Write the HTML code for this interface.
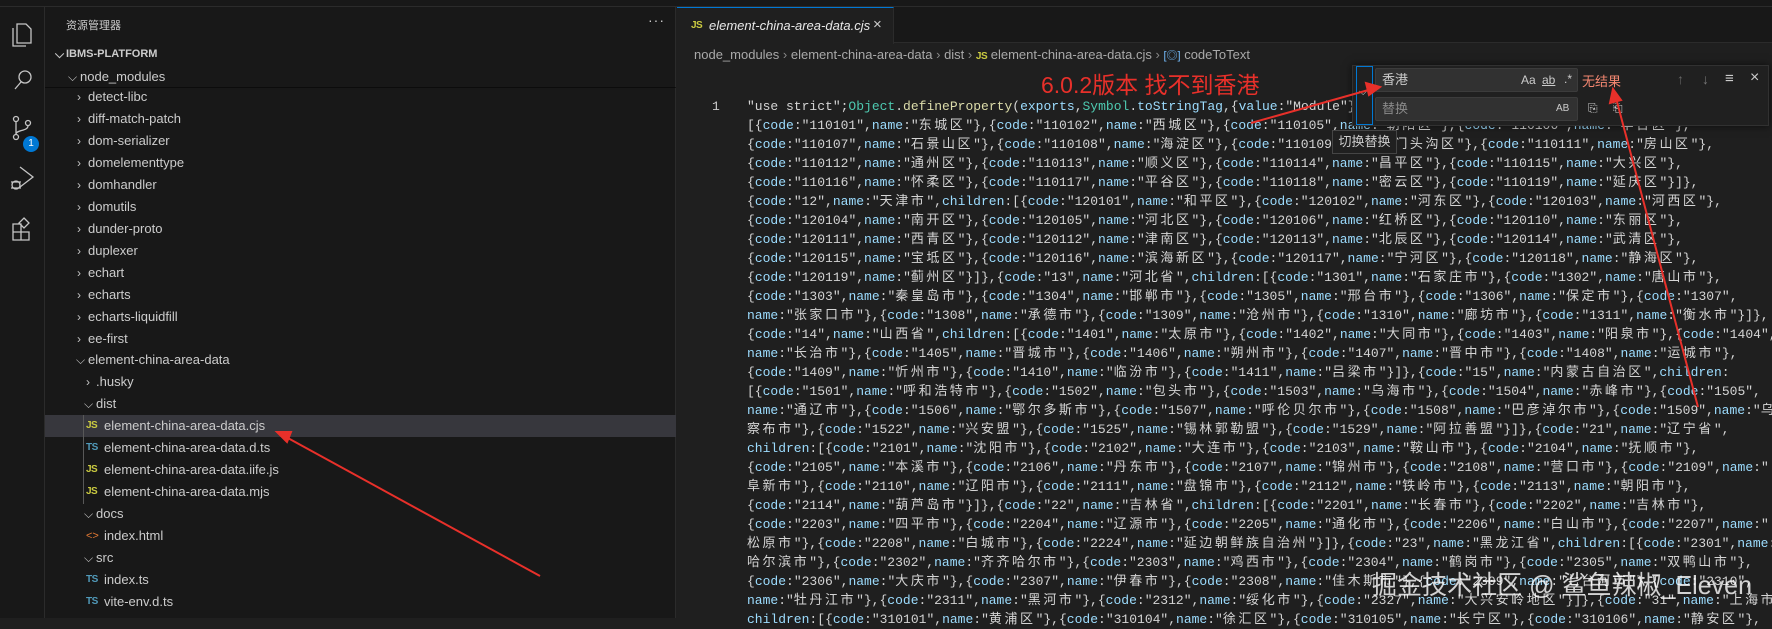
<!DOCTYPE html>
<html><head><meta charset="utf-8">
<style>
*{margin:0;padding:0;box-sizing:border-box}
body{width:1772px;height:618px;overflow:hidden;background:#1f1f1f;position:relative;font-family:"Liberation Sans","Noto Sans CJK SC",sans-serif;color:#cccccc}
.abs{position:absolute}
#top{left:0;top:0;width:1772px;height:7px;background:#181818;border-bottom:1px solid #2b2b2b}
#act{left:0;top:7px;width:45px;height:611px;background:#181818;border-right:1px solid #2b2b2b}
#side{left:45px;top:7px;width:631px;height:611px;background:#181818;border-right:1px solid #2b2b2b}
.row{position:absolute;left:45px;width:631px;height:22px;line-height:22px;font-size:13px;color:#cccccc;white-space:nowrap}
.row span{position:absolute}
.chev{color:#c5c5c5;font-size:12px}
.sel{background:#37373d}
.js{color:#cbcb41;font-weight:bold;font-size:10px;letter-spacing:-0.5px}
.ts{color:#519aba;font-weight:bold;font-size:10px;letter-spacing:-0.5px}
#tabs{left:677px;top:7px;width:1095px;height:36px;background:#181818;border-bottom:1px solid #2b2b2b}
#tab{left:677px;top:7px;width:217px;height:37px;background:#1f1f1f;border-top:1px solid #0078d4;border-right:1px solid #2b2b2b}
#bc{left:694px;top:44px;height:21px;line-height:21px;font-size:13px;color:#a9a9a9;white-space:nowrap}
#code{left:747px;top:97px;font-family:"Liberation Mono","Noto Sans CJK SC",monospace;font-size:13px;line-height:19px;color:#d4d4d4;white-space:pre}
#code .c{letter-spacing:2.56px}
#code .k{color:#9cdcfe}
#code .t{color:#4ec9b0}
#code .f{color:#dcdcaa}
#ln{left:712px;top:97px;font-family:"Liberation Mono",monospace;font-size:13px;line-height:19px;color:#cccccc}
#find{left:1352px;top:65px;width:417px;height:61px;background:#202020;box-shadow:0 0 8px rgba(0,0,0,.6);border:1px solid #313131}
.inp{position:absolute;background:#313131;border:1px solid #3c3c3c;border-radius:2px;height:24px;font-size:13px;line-height:22px;color:#ccc;padding-left:6px}
.ic{position:absolute;font-size:12px;color:#ccc}
#tip{left:1332px;top:130px;width:65px;height:24px;background:#202020;border:1px solid #454545;font-size:13px;line-height:22px;text-align:center;color:#ccc}
#ann{left:1041px;top:66px;font-size:23px;color:#e8302a;white-space:nowrap}
</style></head><body>
<div id="top" class="abs"></div>
<div id="act" class="abs">
<svg width="45" height="611" viewBox="0 0 45 611" fill="none" stroke="#c5c5c5" stroke-width="1.3">
 <path d="M17 17h9l5 5v14H17z M13 21v18h13"/>
 <circle cx="25" cy="70" r="6"/><path d="M21 75l-6 7"/>
 <circle cx="16" cy="112" r="2.5"/><circle cx="16" cy="130" r="2.5"/><circle cx="28" cy="116" r="2.5"/><path d="M16 115v12 M28 119c0 5-12 4-12 8"/>
 <path d="M20 160l13 10-13 10" /><circle cx="16" cy="178" r="4"/><path d="M11 175h10 M11 181h10"/>
 <path d="M13 217h8v8h-8z M13 225h8v8h-8z M21 225h8v8h-8z M24 211l5 5-5 5-5-5z"/>
</svg>
<div class="abs" style="left:23px;top:129px;width:16px;height:16px;border-radius:50%;background:#0078d4;color:#fff;font-size:10px;line-height:16px;text-align:center">1</div>
</div>
<div id="side" class="abs"></div>
<div class="abs" style="left:66px;top:17px;font-size:11px;color:#ccc">资源管理器</div>
<div class="abs" style="left:648px;top:12px;font-size:14px;color:#ccc;letter-spacing:1px">···</div>
<div class="row" style="top:43px;font-weight:bold;font-size:11px"><span class="chev" style="left:10px">⌵</span><span style="left:21px">IBMS-PLATFORM</span></div>
<div class="row" style="top:66px"><span class="chev" style="left:23px">⌵</span><span style="left:35px">node_modules</span></div>
<div class="abs" style="left:45px;top:87px;width:631px;height:1px;background:#000;opacity:.5"></div>
<div class="row" style="top:86px"><span class="chev" style="left:32px">›</span><span style="left:43px">detect-libc</span></div>
<div class="row" style="top:108px"><span class="chev" style="left:32px">›</span><span style="left:43px">diff-match-patch</span></div>
<div class="row" style="top:130px"><span class="chev" style="left:32px">›</span><span style="left:43px">dom-serializer</span></div>
<div class="row" style="top:152px"><span class="chev" style="left:32px">›</span><span style="left:43px">domelementtype</span></div>
<div class="row" style="top:174px"><span class="chev" style="left:32px">›</span><span style="left:43px">domhandler</span></div>
<div class="row" style="top:196px"><span class="chev" style="left:32px">›</span><span style="left:43px">domutils</span></div>
<div class="row" style="top:218px"><span class="chev" style="left:32px">›</span><span style="left:43px">dunder-proto</span></div>
<div class="row" style="top:240px"><span class="chev" style="left:32px">›</span><span style="left:43px">duplexer</span></div>
<div class="row" style="top:262px"><span class="chev" style="left:32px">›</span><span style="left:43px">echart</span></div>
<div class="row" style="top:284px"><span class="chev" style="left:32px">›</span><span style="left:43px">echarts</span></div>
<div class="row" style="top:306px"><span class="chev" style="left:32px">›</span><span style="left:43px">echarts-liquidfill</span></div>
<div class="row" style="top:328px"><span class="chev" style="left:32px">›</span><span style="left:43px">ee-first</span></div>
<div class="row" style="top:349px"><span class="chev" style="left:31px">⌵</span><span style="left:43px">element-china-area-data</span></div>
<div class="row" style="top:371px"><span class="chev" style="left:41px">›</span><span style="left:51px">.husky</span></div>
<div class="row" style="top:393px"><span class="chev" style="left:39px">⌵</span><span style="left:51px">dist</span></div>
<div class="row sel" style="top:415px"><span class="js" style="left:41px">JS</span><span style="left:59px">element-china-area-data.cjs</span></div>
<div class="row" style="top:437px"><span class="ts" style="left:41px">TS</span><span style="left:59px">element-china-area-data.d.ts</span></div>
<div class="row" style="top:459px"><span class="js" style="left:41px">JS</span><span style="left:59px">element-china-area-data.iife.js</span></div>
<div class="row" style="top:481px"><span class="js" style="left:41px">JS</span><span style="left:59px">element-china-area-data.mjs</span></div>
<div class="abs" style="left:83px;top:415px;width:1px;height:89px;background:#585858"></div>
<div class="row" style="top:503px"><span class="chev" style="left:39px">⌵</span><span style="left:51px">docs</span></div>
<div class="row" style="top:525px"><span style="left:41px;color:#e37933;font-size:11px">&lt;&gt;</span><span style="left:59px">index.html</span></div>
<div class="row" style="top:547px"><span class="chev" style="left:39px">⌵</span><span style="left:51px">src</span></div>
<div class="row" style="top:569px"><span class="ts" style="left:41px">TS</span><span style="left:59px">index.ts</span></div>
<div class="row" style="top:591px"><span class="ts" style="left:41px">TS</span><span style="left:59px">vite-env.d.ts</span></div>

<div id="tabs" class="abs"></div>
<div id="tab" class="abs"><span class="js abs" style="left:14px;top:12px">JS</span><span class="abs" style="left:32px;top:10px;font-size:13px;font-style:italic;color:#e8e8e8">element-china-area-data.cjs</span><span class="abs" style="left:196px;top:8px;font-size:15px;color:#ccc">×</span></div>
<div id="bc" class="abs">node_modules <span style="color:#888">›</span> element-china-area-data <span style="color:#888">›</span> dist <span style="color:#888">›</span> <span class="js">JS</span> element-china-area-data.cjs <span style="color:#888">›</span> <span style="color:#75beff;font-size:11px">[◎]</span> codeToText</div>

<div id="ln" class="abs">1</div>
<div id="code" class="abs"></div>

<div id="ann" class="abs">6.0.2版本 找不到香港</div>

<div id="find" class="abs">
 <div class="abs" style="left:3px;top:0;width:17px;height:59px;border:1px solid #0078d4;background:#202020"></div>
 <div class="abs" style="left:6px;top:20px;font-size:11px;color:#ccc">⌵</div>
 <div class="inp" style="left:22px;top:2px;width:203px">香港<span class="ic" style="left:145px;top:0">Aa</span><span class="ic" style="left:166px;top:0;text-decoration:underline">ab</span><span class="ic" style="left:188px;top:-1px">.*</span></div>
 <div class="abs" style="left:229px;top:5px;font-size:13px;color:#f48771">无结果</div>
 <div class="ic" style="left:324px;top:5px;color:#666;font-size:14px">↑</div>
 <div class="ic" style="left:349px;top:5px;color:#777;font-size:14px">↓</div>
 <div class="ic" style="left:372px;top:4px;font-size:15px">≡</div>
 <div class="ic" style="left:397px;top:3px;font-size:16px">×</div>
 <div class="inp" style="left:22px;top:31px;width:203px;color:#8a8a8a">替换<span class="ic" style="left:180px;top:0;font-size:10px">AB</span></div>
 <div class="ic" style="left:235px;top:35px">⎘</div>
 <div class="ic" style="left:260px;top:35px">⎗</div>
</div>
<div id="tip" class="abs">切换替换</div>

<svg class="abs" style="left:0;top:0" width="1772" height="618">
 <g stroke="#e8302a" stroke-width="2" fill="#e8302a">
  <line x1="1251" y1="123" x2="1372" y2="89"/>
  <polygon points="1380,87 1366,83 1369,95"/>
  <line x1="1698" y1="407" x2="1616" y2="98"/>
  <polygon points="1613,89 1610,103 1621,100"/>
  <line x1="540" y1="576" x2="286" y2="437"/>
  <polygon points="277,432 287,442 291,432"/>
 </g>
 <text x="1372" y="594" font-size="26" textLength="380" lengthAdjust="spacingAndGlyphs" fill="rgba(255,255,255,0.8)" font-family="Liberation Sans, Noto Sans CJK SC, sans-serif">掘金技术社区 @ 鲨鱼辣椒_Eleven</text>
</svg>

<script>
var L=[
'"use strict";Object.defineProperty(exports,Symbol.toStringTag,{value:"Module"}),a=[{code:"11",name:"北京市",children:',
'[{code:"110101",name:"东城区"},{code:"110102",name:"西城区"},{code:"110105",name:"朝阳区"},{code:"110106",name:"丰台区"},',
'{code:"110107",name:"石景山区"},{code:"110108",name:"海淀区"},{code:"110109",name:"门头沟区"},{code:"110111",name:"房山区"},',
'{code:"110112",name:"通州区"},{code:"110113",name:"顺义区"},{code:"110114",name:"昌平区"},{code:"110115",name:"大兴区"},',
'{code:"110116",name:"怀柔区"},{code:"110117",name:"平谷区"},{code:"110118",name:"密云区"},{code:"110119",name:"延庆区"}]},',
'{code:"12",name:"天津市",children:[{code:"120101",name:"和平区"},{code:"120102",name:"河东区"},{code:"120103",name:"河西区"},',
'{code:"120104",name:"南开区"},{code:"120105",name:"河北区"},{code:"120106",name:"红桥区"},{code:"120110",name:"东丽区"},',
'{code:"120111",name:"西青区"},{code:"120112",name:"津南区"},{code:"120113",name:"北辰区"},{code:"120114",name:"武清区"},',
'{code:"120115",name:"宝坻区"},{code:"120116",name:"滨海新区"},{code:"120117",name:"宁河区"},{code:"120118",name:"静海区"},',
'{code:"120119",name:"蓟州区"}]},{code:"13",name:"河北省",children:[{code:"1301",name:"石家庄市"},{code:"1302",name:"唐山市"},',
'{code:"1303",name:"秦皇岛市"},{code:"1304",name:"邯郸市"},{code:"1305",name:"邢台市"},{code:"1306",name:"保定市"},{code:"1307",',
'name:"张家口市"},{code:"1308",name:"承德市"},{code:"1309",name:"沧州市"},{code:"1310",name:"廊坊市"},{code:"1311",name:"衡水市"}]},',
'{code:"14",name:"山西省",children:[{code:"1401",name:"太原市"},{code:"1402",name:"大同市"},{code:"1403",name:"阳泉市"},{code:"1404",',
'name:"长治市"},{code:"1405",name:"晋城市"},{code:"1406",name:"朔州市"},{code:"1407",name:"晋中市"},{code:"1408",name:"运城市"},',
'{code:"1409",name:"忻州市"},{code:"1410",name:"临汾市"},{code:"1411",name:"吕梁市"}]},{code:"15",name:"内蒙古自治区",children:',
'[{code:"1501",name:"呼和浩特市"},{code:"1502",name:"包头市"},{code:"1503",name:"乌海市"},{code:"1504",name:"赤峰市"},{code:"1505",',
'name:"通辽市"},{code:"1506",name:"鄂尔多斯市"},{code:"1507",name:"呼伦贝尔市"},{code:"1508",name:"巴彦淖尔市"},{code:"1509",name:"乌兰',
'察布市"},{code:"1522",name:"兴安盟"},{code:"1525",name:"锡林郭勒盟"},{code:"1529",name:"阿拉善盟"}]},{code:"21",name:"辽宁省",',
'children:[{code:"2101",name:"沈阳市"},{code:"2102",name:"大连市"},{code:"2103",name:"鞍山市"},{code:"2104",name:"抚顺市"},',
'{code:"2105",name:"本溪市"},{code:"2106",name:"丹东市"},{code:"2107",name:"锦州市"},{code:"2108",name:"营口市"},{code:"2109",name:"',
'阜新市"},{code:"2110",name:"辽阳市"},{code:"2111",name:"盘锦市"},{code:"2112",name:"铁岭市"},{code:"2113",name:"朝阳市"},',
'{code:"2114",name:"葫芦岛市"}]},{code:"22",name:"吉林省",children:[{code:"2201",name:"长春市"},{code:"2202",name:"吉林市"},',
'{code:"2203",name:"四平市"},{code:"2204",name:"辽源市"},{code:"2205",name:"通化市"},{code:"2206",name:"白山市"},{code:"2207",name:"',
'松原市"},{code:"2208",name:"白城市"},{code:"2224",name:"延边朝鲜族自治州"}]},{code:"23",name:"黑龙江省",children:[{code:"2301",name:"',
'哈尔滨市"},{code:"2302",name:"齐齐哈尔市"},{code:"2303",name:"鸡西市"},{code:"2304",name:"鹤岗市"},{code:"2305",name:"双鸭山市"},',
'{code:"2306",name:"大庆市"},{code:"2307",name:"伊春市"},{code:"2308",name:"佳木斯市"},{code:"2309",name:"七台河市"},{code:"2310",',
'name:"牡丹江市"},{code:"2311",name:"黑河市"},{code:"2312",name:"绥化市"},{code:"2327",name:"大兴安岭地区"}]},{code:"31",name:"上海市",',
'children:[{code:"310101",name:"黄浦区"},{code:"310104",name:"徐汇区"},{code:"310105",name:"长宁区"},{code:"310106",name:"静安区"},'
];
var h=L.map(function(s){
 return s.replace(/([\u4e00-\u9fff]+)|\b(Object|Symbol)\b|\b(defineProperty)\b|\b(code|name|children|value|exports|toStringTag)\b/g,function(m,c,t,f,k){
  if(c)return '<span class="c">'+c+'</span>';
  if(t)return '<span class="t">'+t+'</span>';
  if(f)return '<span class="f">'+f+'</span>';
  return '<span class="k">'+k+'</span>';
 });
}).join('\n');
document.getElementById('code').innerHTML=h;
</script>
</body></html>
